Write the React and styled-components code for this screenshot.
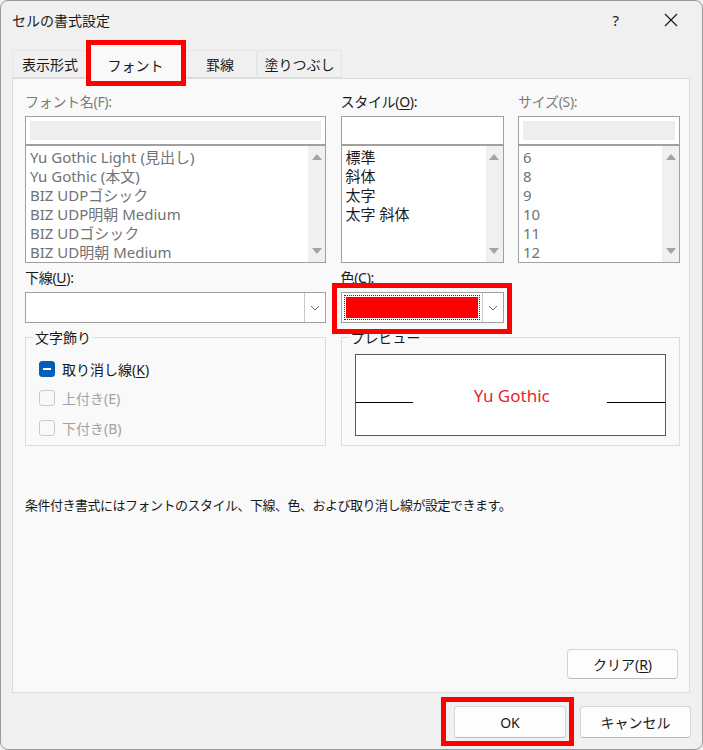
import React from "react"
import styled, { createGlobalStyle } from "styled-components"

const GlobalStyle = createGlobalStyle`
  html, body {
    margin: 0;
    padding: 0;
    background: #f0f0f0;
  }
  body {
    font-family: "Noto Sans", "Noto Sans CJK JP", sans-serif;
    color: #1a1a1a;
  }
`

const fonts = [
  "Yu Gothic Light (見出し)",
  "Yu Gothic (本文)",
  "BIZ UDPゴシック",
  "BIZ UDP明朝 Medium",
  "BIZ UDゴシック",
  "BIZ UD明朝 Medium",
]
const styles = ["標準", "斜体", "太字", "太字 斜体"]
const sizes = ["6", "8", "9", "10", "11", "12"]

const Chevron = () => (
  <svg width="10" height="6" viewBox="0 0 10 6">
    <polyline points="1,1 5,5 9,1" fill="none" stroke="#6a6a6a" strokeWidth="1" />
  </svg>
)

const CloseIcon = () => (
  <svg width="14" height="14" viewBox="0 0 14 14">
    <path d="M1 1 L13 13 M13 1 L1 13" stroke="#1a1a1a" strokeWidth="1.2" />
  </svg>
)

const ListBox = ({ items, muted }) => (
  <List>
    <Items $muted={muted}>
      {items.map((t) => (
        <Item key={t}>{t}</Item>
      ))}
    </Items>
    <Scroll>
      <Arrow $up />
      <Arrow />
    </Scroll>
  </List>
)

const App = () => (
  <>
    <GlobalStyle />
    <Window>
      <TitleBar>
        <Title>セルの書式設定</Title>
        <TitleButtons>
          <Help>?</Help>
          <CloseIcon />
        </TitleButtons>
      </TitleBar>

      <TabRow>
        <Tab $w={76}>表示形式</Tab>
        <Tab $w={95} $active>
          フォント
          <Highlight $t={-4} $l={-3} $r={-4} $b={-6} />
        </Tab>
        <Tab $w={74}>罫線</Tab>
        <Tab $w={85}>塗りつぶし</Tab>
      </TabRow>

      <Panel>
        <Grid>
          <Field>
            <Label $muted>フォント名(F):</Label>
            <Input $disabled />
            <ListBox items={fonts} muted />
          </Field>
          <Field>
            <Label>
              スタイル(<u>O</u>):
            </Label>
            <Input />
            <ListBox items={styles} />
          </Field>
          <Field>
            <Label $muted>サイズ(S):</Label>
            <Input $disabled />
            <ListBox items={sizes} muted />
          </Field>

          <Field $top={6}>
            <Label>
              下線(<u>U</u>):
            </Label>
            <Combo>
              <ComboValue />
              <ComboButton>
                <Chevron />
              </ComboButton>
            </Combo>
          </Field>
          <Field $top={6}>
            <Label>色(C):</Label>
            <Combo>
              <ComboValue>
                <ColorFocus>
                  <Swatch />
                </ColorFocus>
              </ComboValue>
              <ComboButton>
                <Chevron />
              </ComboButton>
              <Highlight $t={-10} $l={-10} $r={-9} $b={-12} />
            </Combo>
          </Field>
          <div />

          <Group $top={14}>
            <Legend>文字飾り</Legend>
            <CheckRow>
              <CheckBox $checked />
              <span>
                取り消し線(<u>K</u>)
              </span>
            </CheckRow>
            <CheckRow $disabled>
              <CheckBox />
              <span>上付き(E)</span>
            </CheckRow>
            <CheckRow $disabled>
              <CheckBox />
              <span>下付き(B)</span>
            </CheckRow>
          </Group>
          <Group $top={14} $span={2}>
            <Legend>プレビュー</Legend>
            <Preview>
              <BaseLine $w={57} />
              <PreviewText>Yu Gothic</PreviewText>
              <BaseLine $w={58} />
            </Preview>
          </Group>
        </Grid>

        <Note>
          条件付き書式にはフォントのスタイル、下線、色、および取り消し線が設定できます。
        </Note>

        <PanelActions>
          <Button $w={111} $h={30}>
            <span>
              クリア(<u>R</u>)
            </span>
          </Button>
        </PanelActions>
      </Panel>

      <Footer>
        <Button $w={112} $h={32}>
          OK
          <Highlight $t={-10} $l={-14} $r={-9} $b={-9} />
        </Button>
        <Button $w={111} $h={32}>
          キャンセル
        </Button>
      </Footer>
    </Window>
  </>
)

export default App

const Window = styled.div`
  box-sizing: border-box;
  width: 703px;
  height: 750px;
  background: #f0f0f0;
  border: 1px solid #9a9a9a;
  border-radius: 8px;
  display: flex;
  flex-direction: column;
  overflow: hidden;
`

const TitleBar = styled.div`
  height: 38px;
  display: flex;
  align-items: center;
  justify-content: space-between;
  padding: 0 24px 0 11px;
`

const Title = styled.div`
  font-size: 14px;
  color: #1a1a1a;
`

const TitleButtons = styled.div`
  display: flex;
  align-items: center;
  gap: 45px;
`

const Help = styled.span`
  font-size: 15px;
  color: #1a1a1a;
`

const TabRow = styled.div`
  height: 34px;
  margin-top: 5px;
  display: flex;
  align-items: flex-end;
  padding-left: 11px;
  position: relative;
  z-index: 1;
`

const Tab = styled.div`
  position: relative;
  box-sizing: border-box;
  width: ${(p) => p.$w}px;
  height: ${(p) => (p.$active ? 37 : 28)}px;
  margin-bottom: ${(p) => (p.$active ? -2 : 0)}px;
  display: flex;
  align-items: center;
  justify-content: center;
  padding-top: ${(p) => (p.$active ? 5 : 0)}px;
  font-size: 14px;
  background: ${(p) => (p.$active ? "#f9f9f9" : "#f0f0f0")};
  border: 1px solid #e6e6e6;
  border-bottom: ${(p) => (p.$active ? "none" : "1px solid #dcdcdc")};
  border-radius: 2px 2px 0 0;
`

const Highlight = styled.span`
  position: absolute;
  top: ${(p) => p.$t}px;
  left: ${(p) => p.$l}px;
  right: ${(p) => p.$r}px;
  bottom: ${(p) => p.$b}px;
  border: 5px solid #ff0000;
  pointer-events: none;
  z-index: 3;
`

const Panel = styled.div`
  box-sizing: border-box;
  margin: 0 12px 0 11px;
  height: 615px;
  background: #f9f9f9;
  border: 1px solid #dcdcdc;
  padding: 14px 11px 13px 12px;
  display: flex;
  flex-direction: column;
`

const Grid = styled.div`
  display: grid;
  grid-template-columns: 301px 163px 162px;
  column-gap: 14.5px;
`

const Field = styled.div`
  display: flex;
  flex-direction: column;
  margin-top: ${(p) => p.$top || 0}px;
  position: relative;
`

const Label = styled.div`
  font-size: 14px;
  line-height: 18px;
  height: 18px;
  margin: 0 0 5px 0;
  color: ${(p) => (p.$muted ? "#7c7c7c" : "#1a1a1a")};
  white-space: nowrap;
  letter-spacing: -0.3px;

  u {
    text-underline-offset: 2px;
  }
`

const Input = styled.div`
  box-sizing: border-box;
  height: 29px;
  border: 1px solid #a0a0a0;
  background: #ffffff;
  padding: 4px;

  &::after {
    content: "";
    display: ${(p) => (p.$disabled ? "block" : "none")};
    height: 100%;
    background: #eeeeee;
  }
`

const List = styled.div`
  box-sizing: border-box;
  height: 118px;
  border: 1px solid #a0a0a0;
  background: #ffffff;
  display: flex;
`

const Items = styled.div`
  flex: 1;
  padding: 2px 0 0 4px;
  overflow: hidden;
  color: ${(p) => (p.$muted ? "#727272" : "#1a1a1a")};
`

const Item = styled.div`
  font-size: 15px;
  line-height: 19px;
  white-space: nowrap;
`

const Scroll = styled.div`
  width: 17px;
  background: #f0f0f0;
  display: flex;
  flex-direction: column;
  justify-content: space-between;
  align-items: center;
  padding: 8px 0;
`

const Arrow = styled.span`
  width: 0;
  height: 0;
  border-left: 5px solid transparent;
  border-right: 5px solid transparent;
  ${(p) =>
    p.$up ? "border-bottom: 6px solid #a3a3a3;" : "border-top: 6px solid #a3a3a3;"}
`

const Combo = styled.div`
  position: relative;
  box-sizing: border-box;
  height: 31px;
  border: 1px solid #a0a0a0;
  background: #ffffff;
  display: flex;
`

const ComboValue = styled.div`
  flex: 1;
  display: flex;
  padding: 2px;
`

const ComboButton = styled.div`
  width: 20px;
  border-left: 1px solid #c8c8c8;
  background: #ffffff;
  display: flex;
  align-items: center;
  justify-content: center;
`

const ColorFocus = styled.div`
  flex: 1;
  border: 1px dotted #333;
  padding: 1px;
  display: flex;
`

const Swatch = styled.div`
  flex: 1;
  background: #ff0000;
`

const Group = styled.div`
  grid-column: span ${(p) => p.$span || 1};
  margin-top: ${(p) => p.$top || 0}px;
  box-sizing: border-box;
  height: 109px;
  border: 1px solid #dcdcdc;
  position: relative;
  padding: 16px 0 0 13px;
`

const Legend = styled.div`
  position: absolute;
  top: -9px;
  left: 7px;
  padding: 0 2px;
  background: #f9f9f9;
  font-size: 14px;
  line-height: 18px;
`

const CheckRow = styled.div`
  display: flex;
  align-items: center;
  gap: 7px;
  height: 29.5px;
  font-size: 14px;
  color: ${(p) => (p.$disabled ? "#a2a2a2" : "#1a1a1a")};

  u {
    text-underline-offset: 2px;
  }
`

const CheckBox = styled.span`
  box-sizing: border-box;
  width: 16px;
  height: 16px;
  border-radius: 3px;
  border: 1px solid ${(p) => (p.$checked ? "#005fb8" : "#cacaca")};
  background: ${(p) => (p.$checked ? "#005fb8" : "#f9f9f9")};
  display: flex;
  align-items: center;
  justify-content: center;

  &::after {
    content: "";
    display: ${(p) => (p.$checked ? "block" : "none")};
    width: 8px;
    height: 2px;
    background: #ffffff;
  }
`

const Preview = styled.div`
  box-sizing: border-box;
  margin-right: 13px;
  height: 82px;
  border: 1px solid #5a5a5a;
  background: #ffffff;
  display: flex;
  align-items: center;
  justify-content: space-between;
`

const BaseLine = styled.span`
  width: ${(p) => p.$w}px;
  height: 1px;
  background: #000;
  margin-top: 14px;
`

const PreviewText = styled.span`
  font-size: 17px;
  color: #e02a35;
  margin-left: 4px;
`

const Note = styled.div`
  margin-top: 50px;
  font-size: 13px;
  line-height: 18px;
  color: #1a1a1a;
  white-space: nowrap;
  letter-spacing: -0.5px;
`

const PanelActions = styled.div`
  margin-top: auto;
  display: flex;
  justify-content: flex-end;
`

const Button = styled.div`
  position: relative;
  box-sizing: border-box;
  width: ${(p) => p.$w}px;
  height: ${(p) => p.$h}px;
  background: #fdfdfd;
  border: 1px solid #d4d4d4;
  border-bottom-color: #bcbcbc;
  border-radius: 4px;
  display: flex;
  align-items: center;
  justify-content: center;
  font-size: 14px;
  color: #1a1a1a;

  u {
    text-underline-offset: 2px;
  }
`

const Footer = styled.div`
  flex: 1;
  display: flex;
  justify-content: flex-end;
  align-items: flex-start;
  gap: 14px;
  padding: 13px 11px 0 0;
`
